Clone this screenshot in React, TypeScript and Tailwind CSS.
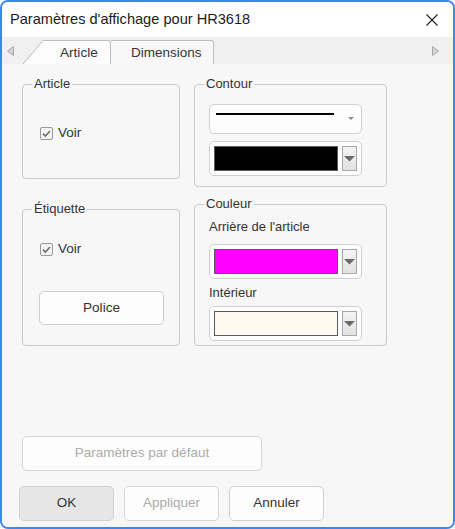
import React from "react";

const Check = () => (
  <div className="w-[13px] h-[13px] rounded-[2px] border border-[#9a9a9a] bg-[#f3f3f3] flex items-center justify-center">
    <svg width="11" height="11" viewBox="0 0 11 11">
      <path d="M2 5.6 L4.4 8 L9 3" fill="none" stroke="#6e6e6e" strokeWidth="1.6" />
    </svg>
  </div>
);

const ArrowBtn = () => (
  <div className="w-[15px] h-[25px] border border-[#a8a8a8] bg-gradient-to-b from-[#f4f4f4] to-[#e2e2e2] flex items-center justify-center">
    <svg width="11" height="6" viewBox="0 0 11 6">
      <polygon points="0,0 11,0 5.5,5.5" fill="#6a6a6a" />
    </svg>
  </div>
);

const ColorDrop = ({ color }: { color: string }) => (
  <div className="w-[153px] h-[35px] rounded-[5px] border border-[#d0d0d0] bg-[#fdfdfd] flex items-start pt-[4px] pl-[4px] gap-[4px]">
    <div className="w-[124px] h-[25px] border border-[#5c5c5c]" style={{ background: color }} />
    <ArrowBtn />
  </div>
);

export default function App() {
  return (
    <div className="w-[455px] h-[529px] bg-white border-2 border-[#3d85f2] rounded-[8px] overflow-hidden flex flex-col font-['Liberation_Sans',Arial,sans-serif] text-[#333]">
      {/* Title bar */}
      <div className="h-[35px] flex items-center justify-between pl-[8px] pr-[15px] bg-white">
        <span className="text-[14.6px] text-[#1b1b1b]">Paramètres d'affichage pour HR3618</span>
        <svg width="12" height="12" viewBox="0 0 12 12">
          <path d="M0.5 0.5 L11.5 11.5 M11.5 0.5 L0.5 11.5" stroke="#222" strokeWidth="1.1" />
        </svg>
      </div>

      {/* Tab strip */}
      <div className="h-[27px] bg-[#f0f0f0] flex items-end">
        <div className="w-[21px] h-full flex items-center pl-[5px]">
          <svg width="7" height="10" viewBox="0 0 7 10">
            <polygon points="6.5,0.5 6.5,9.5 0.5,5" fill="#d4d4d4" stroke="#a8a8a8" strokeWidth="1" />
          </svg>
        </div>
        <svg width="20" height="24" viewBox="0 0 20 24" className="block">
          <polygon points="0,24 20,0.5 20,24" fill="#fcfcfc" />
          <line x1="0" y1="24" x2="20" y2="0.5" stroke="#bdbdbd" strokeWidth="1" />
        </svg>
        <div className="w-[68px] h-[24px] bg-[#fcfcfc] border-t border-r border-[#bdbdbd] rounded-tr-[3px] flex items-center pl-[17px] pt-[1px] text-[13.6px] text-[#333]">
          Article
        </div>
        <div className="w-[103px] h-[24px] bg-[#f8f8f8] border-t border-r border-[#bdbdbd] rounded-tr-[3px] flex items-center pl-[20px] pt-[1px] text-[13.5px] text-[#333]">
          Dimensions
        </div>
        <div className="flex-1 h-full flex items-center justify-end pr-[14px]">
          <svg width="7" height="10" viewBox="0 0 7 10">
            <polygon points="0.5,0.5 0.5,9.5 6.5,5" fill="#d4d4d4" stroke="#a8a8a8" strokeWidth="1" />
          </svg>
        </div>
      </div>

      {/* Content */}
      <div className="flex-1 bg-[#f7f7f7] flex flex-col">
        <div className="flex pt-[12px] pl-[20px] gap-[14px]">
          {/* Left column */}
          <div className="flex flex-col w-[158px]">
            <fieldset className="h-[103px] border border-[#cacaca] rounded-[4px] px-[9px]">
              <legend className="px-[2px] text-[13px] leading-[16px]">Article</legend>
              <div className="flex items-center gap-[5px] mt-[34px] ml-[8px] text-[13.5px] leading-[14px]">
                <Check />
                <span>Voir</span>
              </div>
            </fieldset>
            <fieldset className="mt-[22px] h-[145px] border border-[#cacaca] rounded-[4px] px-[9px]">
              <legend className="px-[2px] text-[13px] leading-[16px]">Étiquette</legend>
              <div className="flex items-center gap-[5px] mt-[25px] ml-[8px] text-[13.5px] leading-[14px]">
                <Check />
                <span>Voir</span>
              </div>
              <div className="mt-[35px] ml-[7px] w-[125px] h-[34px] rounded-[5px] border border-[#cfcfcf] bg-[#fdfdfd] flex items-center justify-center text-[13.6px]">
                Police
              </div>
            </fieldset>
          </div>

          {/* Right column */}
          <div className="flex flex-col w-[193px]">
            <fieldset className="h-[111px] border border-[#cacaca] rounded-[4px] px-[9px]">
              <legend className="px-[2px] text-[13px] leading-[16px]">Contour</legend>
              <div className="ml-[5px] mt-[12px] w-[153px] h-[30px] rounded-[5px] border border-[#d0d0d0] bg-[#fdfdfd] flex items-start pt-[8px] pl-[6px]">
                <div className="w-[118px] h-[1.5px] bg-black" />
                <svg width="6" height="4" viewBox="0 0 6 4" className="ml-[14px] mt-[4px]">
                  <polygon points="0,0 6,0 3,3" fill="#8a8a8a" />
                </svg>
              </div>
              <div className="ml-[5px] mt-[7px]">
                <ColorDrop color="#000000" />
              </div>
            </fieldset>
            <fieldset className="mt-[9px] h-[150px] border border-[#cacaca] rounded-[4px] px-[9px]">
              <legend className="px-[2px] text-[13px] leading-[16px]">Couleur</legend>
              <div className="ml-[5px] mt-[7px] text-[13px] leading-[16px]">Arrière de l'article</div>
              <div className="ml-[5px] mt-[9px]">
                <ColorDrop color="#ff00ff" />
              </div>
              <div className="ml-[5px] mt-[6px] text-[13px] leading-[16px]">Intérieur</div>
              <div className="ml-[5px] mt-[5px]">
                <ColorDrop color="#fff8ee" />
              </div>
            </fieldset>
          </div>
        </div>

        <div className="flex-1" />

        <div className="flex flex-col pl-[17px] pb-[6px]">
          <div className="ml-[3px] w-[240px] h-[35px] rounded-[5px] border border-[#d6d6d6] bg-[#fdfdfd] flex items-center justify-center text-[13.5px] text-[#ababab]">
            Paramètres par défaut
          </div>
          <div className="flex gap-[10px] mt-[15px]">
            <div className="w-[95px] h-[35px] rounded-[5px] border border-[#d0d0d0] bg-[#e6e6e6] flex items-center justify-center text-[13.5px] text-[#333]">
              OK
            </div>
            <div className="w-[95px] h-[35px] rounded-[5px] border border-[#d6d6d6] bg-[#fdfdfd] flex items-center justify-center text-[13.5px] text-[#ababab]">
              Appliquer
            </div>
            <div className="w-[95px] h-[35px] rounded-[5px] border border-[#d0d0d0] bg-[#fdfdfd] flex items-center justify-center text-[13.5px] text-[#333]">
              Annuler
            </div>
          </div>
        </div>
      </div>
    </div>
  );
}
